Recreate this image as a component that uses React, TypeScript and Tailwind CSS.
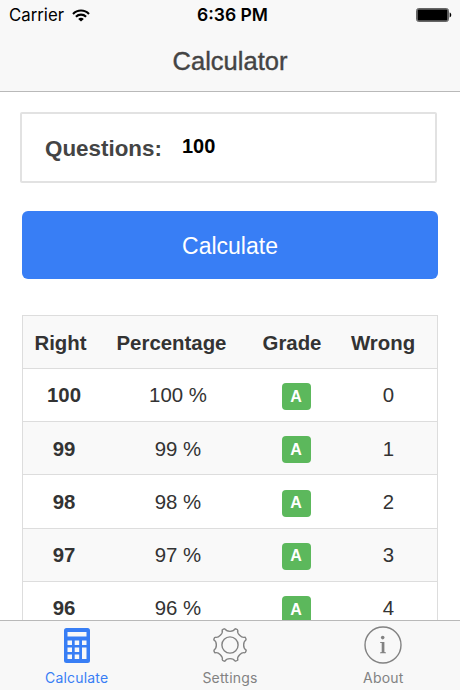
import React from 'react';

const rows = [
  { right: 100, percentage: 100, grade: 'A', wrong: 0 },
  { right: 99, percentage: 99, grade: 'A', wrong: 1 },
  { right: 98, percentage: 98, grade: 'A', wrong: 2 },
  { right: 97, percentage: 97, grade: 'A', wrong: 3 },
  { right: 96, percentage: 96, grade: 'A', wrong: 4 },
];

const WifiIcon: React.FC = () => (
  <svg width="18" height="13" viewBox="0 0 18 13" fill="none" stroke="#000" strokeWidth="2.1">
    <path d="M1 4.9C5.4.3 12.6.3 17 4.9" />
    <path d="M3.9 7.8c2.9-2.9 7.3-2.9 10.2 0" />
    <path d="M9 12.6 6.2 9.9c1.6-1.5 4-1.5 5.6 0z" fill="#000" stroke="none" />
  </svg>
);

const BatteryIcon: React.FC = () => (
  <svg width="36" height="14" viewBox="0 0 36 14">
    <rect x="0.5" y="0.5" width="32" height="13" rx="2.2" fill="#999" stroke="#666" />
    <rect x="1.6" y="1.6" width="29.8" height="10.8" rx="1" fill="#000" />
    <path d="M33.6 4.6c2.2.6 2.2 4.2 0 4.8z" fill="#000" />
  </svg>
);

const CalculatorIcon: React.FC = () => (
  <svg width="26" height="35" viewBox="0 0 26 35">
    <rect width="26" height="35" rx="2.5" fill="#387ef5" />
    <g fill="#f8f8f8">
      <rect x="3.5" y="4" width="19" height="4.5" />
      <rect x="3.5" y="12.5" width="4.5" height="4.5" />
      <rect x="10.7" y="12.5" width="4.5" height="4.5" />
      <rect x="18" y="12.5" width="4.5" height="4.5" />
      <rect x="3.5" y="19.5" width="4.5" height="4.5" />
      <rect x="10.7" y="19.5" width="4.5" height="4.5" />
      <rect x="3.5" y="26.5" width="4.5" height="4.5" />
      <rect x="10.7" y="26.5" width="4.5" height="4.5" />
      <rect x="18" y="19.5" width="4.5" height="11.5" />
    </g>
  </svg>
);

const GearIcon: React.FC = () => (
  <svg width="38" height="38" viewBox="-19 -19 38 38" fill="none" stroke="#828282" strokeWidth="1.4" strokeLinejoin="round">
    <circle r="8.1" />
    {[0, 45, 90, 135, 180, 225, 270, 315].map((angle) => (
      <path
        key={angle}
        transform={`rotate(${angle})`}
        d="M-5.1-16.2C-3.5-12.8 3.5-12.8 5.1-16.2Q6.5-16.1 7.85-15.06"
      />
    ))}
  </svg>
);

const InfoIcon: React.FC = () => (
  <svg width="38" height="38" viewBox="0 0 38 38">
    <circle cx="19" cy="19" r="18" fill="none" stroke="#828282" strokeWidth="1.4" />
    <circle cx="18.7" cy="11.6" r="1.8" fill="#828282" />
    <path d="M16 15.9h4.4v10.2l1.6.4v.8h-6v-.8l1.7-.4v-9l-1.7-.4z" fill="#828282" />
  </svg>
);

const tabs = [
  { label: 'Calculate', icon: <CalculatorIcon />, color: 'text-[#387ef5]' },
  { label: 'Settings', icon: <GearIcon />, color: 'text-[#828282]' },
  { label: 'About', icon: <InfoIcon />, color: 'text-[#828282]' },
];

const App: React.FC = () => {
  return (
    <div className="flex h-[690px] w-[460px] flex-col overflow-hidden bg-white font-['Liberation_Sans',sans-serif]">
      <header className="h-[92px] shrink-0 border-b border-[#b9b9b9] bg-[#f8f8f8]">
        <div className="grid h-[30px] grid-cols-3 items-center pl-[9px] pr-[8px] font-['Inter',sans-serif] text-black">
          <div className="flex items-center gap-[8px] text-[16.8px]">
            <span className="pt-0.5">Carrier</span>
            <WifiIcon />
          </div>
          <span className="pl-[4px] text-center text-[17.5px] font-semibold">6:36 PM</span>
          <div className="flex justify-end">
            <BatteryIcon />
          </div>
        </div>
        <h1 className="flex h-[62px] items-center justify-center text-[25.5px] text-[#444] [-webkit-text-stroke:0.4px_#444]">
          Calculator
        </h1>
      </header>

      <main className="min-h-0 flex-1 overflow-hidden pl-[20px] pr-[22px] pt-5">
        <label className="flex h-[71px] w-[417px] items-center rounded-[2px] border-2 border-[#e2e2e2] pl-[23px]">
          <span className="w-[137px] pt-[3px] text-[22.4px] font-bold text-[#444]">Questions:</span>
          <span className="pb-1 text-[20px] font-bold text-black">100</span>
        </label>

        <button className="ml-0.5 mt-7 block h-[68px] w-[416px] rounded-md bg-[#387ef5] pt-0.5 text-[23px] text-white">
          Calculate
        </button>

        <div className="ml-0.5 mt-9 w-[416px] border border-[#ddd] text-[20.4px] text-[#333]">
          <div className="grid h-[52px] grid-cols-[75px_147px_94px_88px] items-center bg-[#f9f9f9] pt-0.5 text-center font-bold">
            <span>Right</span>
            <span>Percentage</span>
            <span>Grade</span>
            <span>Wrong</span>
          </div>
          {rows.map((row) => (
            <div
              key={row.right}
              className="grid h-[53.2px] grid-cols-[82px_146px_90px_95px] items-center border-t border-[#ddd] pt-[1.4px] text-center even:bg-white odd:bg-[#f9f9f9]"
            >
              <span className="font-bold">{row.right}</span>
              <span>{row.percentage} %</span>
              <span className="mt-[2px] flex h-[27px] w-[29px] items-center justify-center justify-self-center rounded bg-[#5cb85c] text-[16px] font-bold text-white">
                {row.grade}
              </span>
              <span>{row.wrong}</span>
            </div>
          ))}
        </div>
      </main>

      <nav className="grid h-[70px] shrink-0 grid-cols-3 border-t border-[#b9b9b9] bg-[#f8f8f8] font-['Inter',sans-serif]">
        {tabs.map((tab) => (
          <a key={tab.label} className={`flex flex-col items-center pt-[5px] ${tab.color}`}>
            <span className="flex h-[38px] items-center">{tab.icon}</span>
            <span className="mt-[4px] text-[14px] leading-5 tracking-[0.2px]">{tab.label}</span>
          </a>
        ))}
      </nav>
    </div>
  );
};

export default App;
